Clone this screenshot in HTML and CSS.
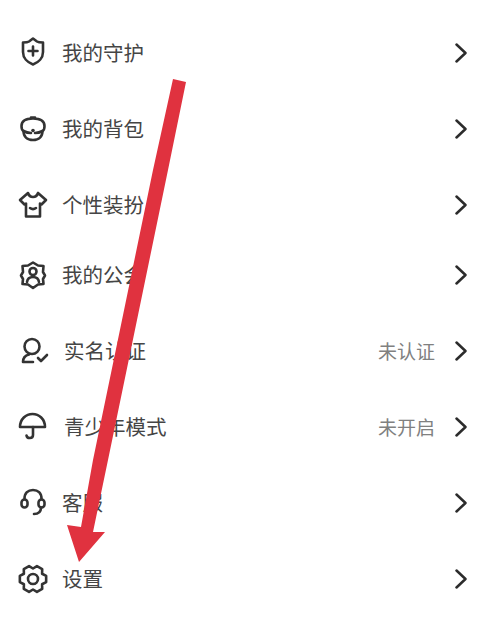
FILE: index.html
```html
<!DOCTYPE html>
<html lang="zh-CN">
<head>
<meta charset="utf-8">
<title>设置菜单</title>
<link rel="stylesheet" href="styles.css">
</head>
<body>
<main class="menu">
  <div class="row">
    <svg class="icon" viewBox="0 0 32 32"><path d="M16 1.500 L20 4.500 C21.500 5.500 23.500 5.500 26 5.500 V15 C26 21 21.500 25.500 16 27.500 C10.500 25.500 6 21 6 15 V5.500 C8.500 5.500 10.500 5.500 12 4.500 Z"/><path d="M11.500 14h9M16 9.500v9"/></svg>
    <span class="label">我的守护</span>
    <svg class="chev" viewBox="0 0 14 20"><path d="M2.500 1.500 L11.500 10 L2.500 18.500"/></svg>
  </div>
  <div class="row">
    <svg class="icon" viewBox="0 0 32 32"><path d="M4.500 13 C4.500 7.500 9 5.500 16 5.500 C23 5.500 27.500 7.500 27.500 13 C27.500 16 26.500 17.500 25.500 18 C25.500 23.500 22 27 16 27 C10 27 6.500 23.500 6.500 18 C5.500 17.500 4.500 16 4.500 13Z"/><path d="M6.500 18 C10 20 12 20 14 20 M18 20 C20 20 22 20 25.500 18 M14 4.500h4"/><circle class="dot" cx="16" cy="17.500" r="1.800"/></svg>
    <span class="label">我的背包</span>
    <svg class="chev" viewBox="0 0 14 20"><path d="M2.500 1.500 L11.500 10 L2.500 18.500"/></svg>
  </div>
  <div class="row">
    <svg class="icon" viewBox="0 0 32 32"><path d="M11 4 L3 11 L7.500 15.500 L9 14.500 V27.500 H23 V14.500 L24.500 15.500 L29 11 L21 4 C20 7 18 8 16 8 C14 8 12 7 11 4Z"/><path d="M13 19c2 1.500 4 1.500 6 0"/></svg>
    <span class="label">个性装扮</span>
    <svg class="chev" viewBox="0 0 14 20"><path d="M2.500 1.500 L11.500 10 L2.500 18.500"/></svg>
  </div>
  <div class="row row-near">
    <svg class="icon" viewBox="0 0 32 32"><path d="M16 3.500 L21 6.500 L26.500 7 L26 13 L28 16.500 L26 20 L26.500 25 L21 25.500 L16 29 L11 25.500 L5.500 25 L6 20 L4 16.500 L6 13 L5.500 7 L11 6.500 Z"/><circle cx="16" cy="12.500" r="3.500"/><path d="M10 23 C10.500 19 13 18 16 18 C19 18 21.500 19 22 23"/></svg>
    <span class="label">我的公会</span>
    <svg class="chev" viewBox="0 0 14 20"><path d="M2.500 1.500 L11.500 10 L2.500 18.500"/></svg>
  </div>
  <div class="row">
    <svg class="icon" viewBox="0 0 32 32"><circle cx="15" cy="11.500" r="7.500"/><path d="M12 19.500 C8 20.500 6 23.500 6 27 H16"/><path d="M21 23 l3 3 l6 -6"/></svg>
    <span class="label label-inset">实名认证</span>
    <span class="status">未认证</span>
    <svg class="chev" viewBox="0 0 14 20"><path d="M2.500 1.500 L11.500 10 L2.500 18.500"/></svg>
  </div>
  <div class="row">
    <svg class="icon" viewBox="0 0 32 32"><path d="M3 16 C3 8 9 3 15.500 3 C22 3 28 8 28 16 Z"/><path d="M16 16 V24 C16 28 10 28 9.500 24.500"/></svg>
    <span class="label label-inset">青少年模式</span>
    <span class="status">未开启</span>
    <svg class="chev" viewBox="0 0 14 20"><path d="M2.500 1.500 L11.500 10 L2.500 18.500"/></svg>
  </div>
  <div class="row">
    <svg class="icon" viewBox="0 0 32 32"><path d="M7.500 12 C7.500 6 11 3 16 3 C21 3 24.500 6 24.500 12"/><rect x="4.500" y="12.500" width="6" height="8" rx="3"/><rect x="21.500" y="12.500" width="6" height="8" rx="3"/><path d="M24 20.500 C24 25 21.500 27 17 27"/></svg>
    <span class="label">客服</span>
    <svg class="chev" viewBox="0 0 14 20"><path d="M2.500 1.500 L11.500 10 L2.500 18.500"/></svg>
  </div>
  <div class="row">
    <svg class="icon" viewBox="0 0 32 32"><path d="M29.150 12.960 L29.150 19.040 L25.100 21.250 L25.200 25.900 L19.950 28.900 L16 26.500 L12.050 28.900 L6.800 25.900 L6.900 21.250 L2.850 19.040 L2.850 12.960 L6.900 10.750 L6.800 6.100 L12.050 3.100 L16 5.500 L19.950 3.100 L25.200 6.100 L25.100 10.750 Z"/><circle cx="16" cy="16" r="5"/></svg>
    <span class="label">设置</span>
    <svg class="chev" viewBox="0 0 14 20"><path d="M2.500 1.500 L11.500 10 L2.500 18.500"/></svg>
  </div>
</main>
<svg class="arrow" viewBox="0 0 494 624"><polygon points="173,79 186,82 168,170 137,320 108,460 93,532 105,532 79,562 67,525 81,527 93,460 122,320 153,170"/></svg>
</body>
</html>
```
FILE: styles.css
```css
html, body {
  margin: 0;
  padding: 0;
  background: #fff;
}
body {
  position: relative;
  width: 494px;
  height: 624px;
  overflow: hidden;
  font-family: "Noto Sans CJK SC", "Noto Sans", sans-serif;
}
.menu {
  display: flex;
  flex-direction: column;
  gap: 36px;
  padding: 33px 26px 0 17px;
}
.row {
  display: flex;
  align-items: center;
  height: 40px;
}
.row-near {
  margin-top: -6px;
}
.icon {
  width: 32px;
  height: 32px;
  margin-right: 14px;
  flex: none;
  fill: none;
  stroke: #333;
  stroke-width: 2.600;
  stroke-linecap: round;
  stroke-linejoin: round;
}
.dot {
  fill: #333;
  stroke: none;
}
.label {
  flex: 1;
  margin-left: -1px;
  padding-bottom: 2px;
  font-size: 20.500px;
  color: #454545;
  white-space: nowrap;
}
.label-inset {
  margin-left: 1px;
}
.status {
  padding-bottom: 2px;
  font-size: 19px;
  color: #808080;
  margin-right: 19px;
  white-space: nowrap;
}
.chev {
  width: 14px;
  height: 20px;
  flex: none;
  fill: none;
  stroke: #2c2c2c;
  stroke-width: 2.500;
  stroke-linecap: round;
  stroke-linejoin: round;
}
.arrow {
  position: absolute;
  left: 0;
  top: 0;
  width: 494px;
  height: 624px;
  fill: #e0323f;
}
```
